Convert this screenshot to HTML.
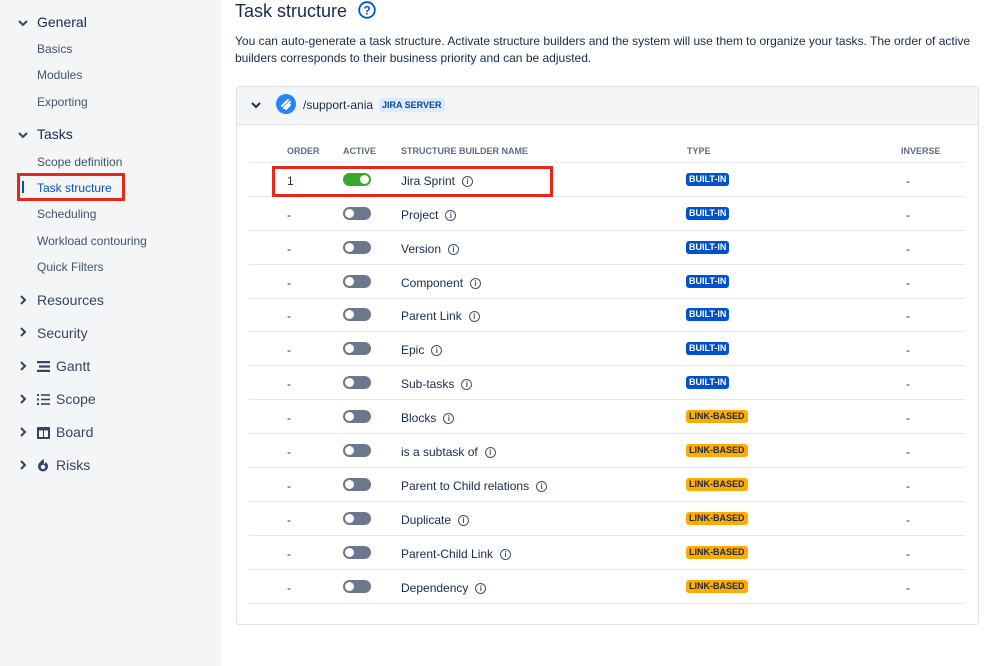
<!DOCTYPE html>
<html><head><meta charset="utf-8"><style>
*{box-sizing:border-box;margin:0;padding:0}
body{width:999px;height:666px;overflow:hidden;font-family:"Liberation Sans",sans-serif;background:#fff;position:relative;color:#172b4d}
#side{position:absolute;left:0;top:0;width:222px;height:666px;background:#f4f5f7}
.h{position:absolute;left:37px;font-size:14px;color:#344563}
.hb{color:#172b4d}
.s{position:absolute;left:37px;font-size:12px;color:#42526e}
.chev{position:absolute;left:17px;width:12px;height:12px}
.a{position:absolute}
.title{position:absolute;left:235px;top:1px;font-size:18px;color:#172b4d}
.desc{position:absolute;left:235px;top:33px;font-size:12px;line-height:16.5px;color:#172b4d;width:745px}
.card{position:absolute;left:236px;top:86px;width:743px;height:539px;border:1px solid #dfe1e6;border-radius:3px;background:#fff}
.ch{position:absolute;left:0;top:0;width:741px;height:38px;background:#f4f5f7;border-bottom:1px solid #e4e6ea}
.th{position:absolute;top:146px;font-size:9px;font-weight:bold;color:#5e6c84}
.row{position:absolute;left:249px;width:716px;height:34px;border-bottom:1px solid #e6e8ec}
.row span{position:absolute;top:11px;font-size:12px;color:#172b4d}
.tg{position:absolute;left:94px;top:10px;width:28px;height:13px;border-radius:7px;background:#6b778c}
.tg::after{content:"";position:absolute;left:2px;top:2px;width:9px;height:9px;border-radius:50%;background:#fff}
.tg.on{background:#36a82f}.tg.on::after{left:17px}
.i{display:inline-block;width:11px;height:11px;border:1px solid #42526e;border-radius:50%;font-size:8px;text-align:center;line-height:9px;margin-left:7px;vertical-align:1px;font-weight:bold;color:#42526e;font-style:normal}
.b{position:absolute;left:437px;top:10px;font-size:9px;font-weight:bold;padding:1px 3px;border-radius:3px;line-height:11px}
.bi{background:#0052cc;color:#fff}
.lb{background:#ffab00;color:#172b4d}
.inv{left:657px!important}
</style></head><body>
<div id="side">
<svg class="chev" style="top:17px" viewBox="0 0 12 12"><path d="M2 4l4 4 4-4" stroke="#344563" stroke-width="2" fill="none"/></svg>
<div class="h hb" style="top:14px">General</div>
<div class="s" style="top:42px">Basics</div>
<div class="s" style="top:68px">Modules</div>
<div class="s" style="top:95px">Exporting</div>
<svg class="chev" style="top:129px" viewBox="0 0 12 12"><path d="M2 4l4 4 4-4" stroke="#344563" stroke-width="2" fill="none"/></svg>
<div class="h hb" style="top:126px">Tasks</div>
<div class="s" style="top:155px">Scope definition</div>
<div class="a" style="left:17px;top:173px;width:108px;height:28px;border:3px solid #e8271b"></div>
<div class="a" style="left:22px;top:181px;width:2px;height:12px;background:#0052cc"></div>
<div class="s" style="top:181px;color:#0052cc">Task structure</div>
<div class="s" style="top:207px">Scheduling</div>
<div class="s" style="top:234px">Workload contouring</div>
<div class="s" style="top:260px">Quick Filters</div>
<svg class="chev" style="top:294px" viewBox="0 0 12 12"><path d="M4 2l4 4-4 4" stroke="#344563" stroke-width="2" fill="none"/></svg>
<div class="h" style="top:292px">Resources</div>
<svg class="chev" style="top:326px" viewBox="0 0 12 12"><path d="M4 2l4 4-4 4" stroke="#344563" stroke-width="2" fill="none"/></svg>
<div class="h" style="top:325px">Security</div>
<svg class="chev" style="top:360px" viewBox="0 0 12 12"><path d="M4 2l4 4-4 4" stroke="#344563" stroke-width="2" fill="none"/></svg>
<svg class="a" style="left:36px;top:360px" width="15" height="13"><rect x="1" y="1" width="13" height="2.2" fill="#344563"/><rect x="3" y="5.4" width="11" height="2.2" fill="#344563"/><rect x="1" y="9.8" width="13" height="2.2" fill="#344563"/></svg>
<div class="h" style="top:358px;left:56px">Gantt</div>
<svg class="chev" style="top:393px" viewBox="0 0 12 12"><path d="M4 2l4 4-4 4" stroke="#344563" stroke-width="2" fill="none"/></svg>
<svg class="a" style="left:36px;top:393px" width="15" height="13"><g fill="#344563"><rect x="1" y="1" width="2" height="2"/><rect x="1" y="5.5" width="2" height="2"/><rect x="1" y="10" width="2" height="2"/><rect x="5" y="1.2" width="9" height="1.6"/><rect x="5" y="5.7" width="9" height="1.6"/><rect x="5" y="10.2" width="9" height="1.6"/></g></svg>
<div class="h" style="top:391px;left:56px">Scope</div>
<svg class="chev" style="top:426px" viewBox="0 0 12 12"><path d="M4 2l4 4-4 4" stroke="#344563" stroke-width="2" fill="none"/></svg>
<svg class="a" style="left:36px;top:426px" width="15" height="14"><rect x="1" y="1" width="13" height="12" rx="1" fill="#344563"/><rect x="3" y="4.5" width="4" height="6.5" fill="#f4f5f7"/><rect x="8" y="4.5" width="4" height="6.5" fill="#f4f5f7"/></svg>
<div class="h" style="top:424px;left:56px">Board</div>
<svg class="chev" style="top:459px" viewBox="0 0 12 12"><path d="M4 2l4 4-4 4" stroke="#344563" stroke-width="2" fill="none"/></svg>
<svg class="a" style="left:36px;top:457px" width="14" height="15"><path d="M7 1.5c0 2-5 3.5-5 8a5 5 0 0010 0c0-2.5-1.2-3.5-2.3-4.5 0 1-1 2-2 2 1-2 0-4-0.7-5.5z" fill="#344563"/><circle cx="7" cy="10" r="2.2" fill="#f4f5f7"/></svg>
<div class="h" style="top:457px;left:56px">Risks</div>
</div>

<div class="title">Task structure <svg style="vertical-align:-2px;margin-left:6px" width="18" height="18"><circle cx="9" cy="9" r="7.8" fill="none" stroke="#0052cc" stroke-width="1.8"/><text x="9" y="13.5" text-anchor="middle" font-size="12" font-weight="bold" fill="#0052cc" font-family="Liberation Sans">?</text></svg></div>
<div class="desc">You can auto-generate a task structure. Activate structure builders and the system will use them to organize your tasks. The order of active builders corresponds to their business priority and can be adjusted.</div>

<div class="card"><div class="ch"></div></div>
<svg class="a" style="left:250px;top:100px" width="12" height="10"><path d="M2 3l4 4 4-4" stroke="#172b4d" stroke-width="2" fill="none"/></svg>
<svg class="a" style="left:276px;top:94px" width="20" height="20"><circle cx="10" cy="10" r="10" fill="#2684ff"/><path d="M6 12l6-6M8 14l6-6M10 15l4-4" stroke="#fff" stroke-width="2" stroke-linecap="round"/></svg>
<div class="a" style="left:303px;top:98px;font-size:12px;color:#172b4d">/support-ania</div>
<div class="a" style="left:379px;top:98px;font-size:9px;font-weight:bold;color:#0747a6;background:#deebff;padding:2px 3px;border-radius:3px">JIRA SERVER</div>

<div class="th" style="left:287px">ORDER</div>
<div class="th" style="left:343px">ACTIVE</div>
<div class="th" style="left:401px">STRUCTURE BUILDER NAME</div>
<div class="th" style="left:687px">TYPE</div>
<div class="th" style="left:901px">INVERSE</div>
<div class="a" style="left:249px;top:162px;width:716px;height:1px;background:#ebecf0"></div>

<div class="row" style="top:163px"><span style="left:38px">1</span><div class="tg on"></div><span style="left:152px">Jira Sprint<i class="i">i</i></span><div class="b bi">BUILT-IN</div><span class="inv">-</span></div>
<div class="row" style="top:197px"><span style="left:38px">-</span><div class="tg"></div><span style="left:152px">Project<i class="i">i</i></span><div class="b bi">BUILT-IN</div><span class="inv">-</span></div>
<div class="row" style="top:231px"><span style="left:38px">-</span><div class="tg"></div><span style="left:152px">Version<i class="i">i</i></span><div class="b bi">BUILT-IN</div><span class="inv">-</span></div>
<div class="row" style="top:265px"><span style="left:38px">-</span><div class="tg"></div><span style="left:152px">Component<i class="i">i</i></span><div class="b bi">BUILT-IN</div><span class="inv">-</span></div>
<div class="row" style="top:298px"><span style="left:38px">-</span><div class="tg"></div><span style="left:152px">Parent Link<i class="i">i</i></span><div class="b bi">BUILT-IN</div><span class="inv">-</span></div>
<div class="row" style="top:332px"><span style="left:38px">-</span><div class="tg"></div><span style="left:152px">Epic<i class="i">i</i></span><div class="b bi">BUILT-IN</div><span class="inv">-</span></div>
<div class="row" style="top:366px"><span style="left:38px">-</span><div class="tg"></div><span style="left:152px">Sub-tasks<i class="i">i</i></span><div class="b bi">BUILT-IN</div><span class="inv">-</span></div>
<div class="row" style="top:400px"><span style="left:38px">-</span><div class="tg"></div><span style="left:152px">Blocks<i class="i">i</i></span><div class="b lb">LINK-BASED</div><span class="inv">-</span></div>
<div class="row" style="top:434px"><span style="left:38px">-</span><div class="tg"></div><span style="left:152px">is a subtask of<i class="i">i</i></span><div class="b lb">LINK-BASED</div><span class="inv">-</span></div>
<div class="row" style="top:468px"><span style="left:38px">-</span><div class="tg"></div><span style="left:152px">Parent to Child relations<i class="i">i</i></span><div class="b lb">LINK-BASED</div><span class="inv">-</span></div>
<div class="row" style="top:502px"><span style="left:38px">-</span><div class="tg"></div><span style="left:152px">Duplicate<i class="i">i</i></span><div class="b lb">LINK-BASED</div><span class="inv">-</span></div>
<div class="row" style="top:536px"><span style="left:38px">-</span><div class="tg"></div><span style="left:152px">Parent-Child Link<i class="i">i</i></span><div class="b lb">LINK-BASED</div><span class="inv">-</span></div>
<div class="row" style="top:570px"><span style="left:38px">-</span><div class="tg"></div><span style="left:152px">Dependency<i class="i">i</i></span><div class="b lb">LINK-BASED</div><span class="inv">-</span></div>

<div class="a" style="left:272px;top:166px;width:281px;height:31px;border:3px solid #e8271b"></div>
</body></html>
